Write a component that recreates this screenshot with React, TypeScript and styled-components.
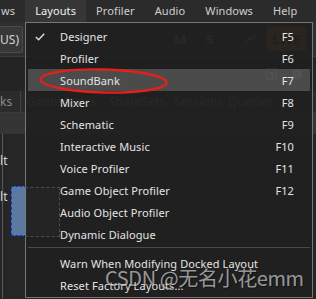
import React from 'react';
import styled, { createGlobalStyle, css } from 'styled-components';

const GlobalStyle = createGlobalStyle`
  html, body {
    margin: 0;
    padding: 0;
    background: #262626;
  }
  body {
    font-family: 'Noto Sans', 'Segoe UI', sans-serif;
    -webkit-font-smoothing: antialiased;
  }
`;

interface LayoutEntry {
  label: string;
  shortcut?: string;
  checked?: boolean;
  active?: boolean;
}

const menuBarItems = ['ws', 'Layouts', 'Profiler', 'Audio', 'Windows', 'Help'];

const layoutEntries: LayoutEntry[] = [
  { label: 'Designer', shortcut: 'F5', checked: true },
  { label: 'Profiler', shortcut: 'F6' },
  { label: 'SoundBank', shortcut: 'F7', active: true },
  { label: 'Mixer', shortcut: 'F8' },
  { label: 'Schematic', shortcut: 'F9' },
  { label: 'Interactive Music', shortcut: 'F10' },
  { label: 'Voice Profiler', shortcut: 'F11' },
  { label: 'Game Object Profiler', shortcut: 'F12' },
  { label: 'Audio Object Profiler' },
  { label: 'Dynamic Dialogue' },
];

const optionEntries: LayoutEntry[] = [
  { label: 'Warn When Modifying Docked Layout' },
  { label: 'Reset Factory Layouts...' },
];

const explorerTabs = [
  { label: 'ks', width: 21 },
  { label: 'Game Syncs', width: 82 },
  { label: 'ShareSets', width: 65 },
  { label: 'Sessions', width: 54 },
  { label: 'Queries', width: 60 },
];

const Check = () => (
  <svg width="10" height="8" viewBox="0 0 10 8">
    <polyline
      points="0.8,4 3.6,6.8 9.2,0.8"
      fill="none"
      stroke="#dcdcdc"
      strokeWidth="1.4"
    />
  </svg>
);

const Wave = () => (
  <svg width="11" height="8" viewBox="0 0 11 8">
    <polyline
      points="0,7 3,3 5,5 8,1 11,3"
      fill="none"
      stroke="#8c8c8c"
      strokeWidth="1.3"
    />
  </svg>
);

const MenuRow = ({ entry }: { entry: LayoutEntry }) => (
  <Item $active={entry.active}>
    <CheckCell>{entry.checked && <Check />}</CheckCell>
    <span>{entry.label}</span>
    <Shortcut>{entry.shortcut}</Shortcut>
  </Item>
);

export default function App() {
  return (
    <>
      <GlobalStyle />
      <Screen>
        <MenuBar>
          {menuBarItems.map((item) => (
            <MenuBarItem key={item} $open={item === 'Layouts'} $cut={item === 'ws'}>
              {item}
            </MenuBarItem>
          ))}
        </MenuBar>

        <Toolbar>
          <Combo>US)</Combo>
          <ToolGlyph $offset={151}>M</ToolGlyph>
          <ToolGlyph $offset={22}>S</ToolGlyph>
          <WaveSlot>
            <Wave />
          </WaveSlot>
          <LiveButton>LIVE</LiveButton>
        </Toolbar>

        <InfoBar>
          <CountBadge>1</CountBadge>
          <HelpBadge>?</HelpBadge>
        </InfoBar>

        <TabRow>
          {explorerTabs.map((tab) => (
            <Tab key={tab.label} $width={tab.width}>
              {tab.label}
            </Tab>
          ))}
        </TabRow>

        <HeaderRow />

        <ListPanel>
          <ListRow>lt</ListRow>
          <ListRow>lt</ListRow>
          <DropTarget />
        </ListPanel>

        <Dropdown>
          {layoutEntries.map((entry) => (
            <MenuRow key={entry.label} entry={entry} />
          ))}
          <Separator />
          {optionEntries.map((entry) => (
            <MenuRow key={entry.label} entry={entry} />
          ))}
        </Dropdown>

        <DragOutline />

        <Annotation width="316" height="299" viewBox="0 0 316 299">
          <ellipse
            cx="103.5"
            cy="81"
            rx="63"
            ry="11.5"
            fill="none"
            stroke="#e3201b"
            strokeWidth="2.4"
            transform="rotate(1.5 103.5 81)"
          />
        </Annotation>

        <Watermark>CSDN @无名小花emm</Watermark>
      </Screen>
    </>
  );
}

const Screen = styled.div`
  position: relative;
  width: 316px;
  height: 299px;
  overflow: hidden;
  background: #262626;
  font-size: 11px;
  letter-spacing: 0.1px;
`;

const MenuBar = styled.div`
  height: 22px;
  display: flex;
  background: #2b2b2b;
`;

const MenuBarItem = styled.div<{ $open?: boolean; $cut?: boolean }>`
  height: 22px;
  line-height: 22px;
  padding: ${({ $cut }) => ($cut ? '0 10px 0 1px' : '0 10px')};
  color: #cfcfcf;
  font-size: 11px;
  white-space: nowrap;
  ${({ $open }) =>
    $open &&
    css`
      background: #363636;
      color: #f0f0f0;
    `};
`;

const Toolbar = styled.div`
  height: 34px;
  display: flex;
  align-items: center;
  background: #2f2f2f;
  border-bottom: 1px solid #3d3d3d;
`;

const Combo = styled.div`
  width: 24px;
  height: 27px;
  margin-left: -1px;
  box-sizing: border-box;
  display: flex;
  align-items: center;
  background: #383838;
  border: 1px solid #4a4a4a;
  border-radius: 2px;
  color: #d4d4d4;
  font-size: 12px;
  white-space: nowrap;
  overflow: hidden;
`;

const ToolGlyph = styled.div<{ $offset: number }>`
  margin-left: ${({ $offset }) => $offset}px;
  width: 10px;
  color: #8a8a8a;
  font-weight: 700;
  font-size: 13px;
`;

const WaveSlot = styled.div`
  margin-left: 30px;
  display: flex;
`;

const LiveButton = styled.div`
  margin-left: 10px;
  width: 39px;
  height: 24px;
  display: flex;
  align-items: center;
  justify-content: center;
  border-radius: 2px;
  background: #9a6a14;
  color: #1a140a;
  font-weight: 700;
  font-size: 13px;
`;

const InfoBar = styled.div`
  height: 34px;
  display: flex;
  align-items: center;
  justify-content: flex-end;
  gap: 15px;
  padding-right: 14px;
  background: #242424;
`;

const CountBadge = styled.div`
  width: 11px;
  height: 12px;
  box-sizing: border-box;
  border: 1px solid #9a9a9a;
  border-radius: 2px;
  display: flex;
  align-items: center;
  justify-content: center;
  color: #bcbcbc;
  font-size: 9px;
  font-weight: 700;
`;

const HelpBadge = styled.div`
  width: 10px;
  height: 10px;
  border-radius: 50%;
  background: #8a8a8a;
  display: flex;
  align-items: center;
  justify-content: center;
  color: #242424;
  font-size: 8px;
  font-weight: 700;
`;

const TabRow = styled.div`
  height: 22px;
  display: flex;
  background: #2b2b2b;
  border-bottom: 1px solid #3a3a3a;
  box-sizing: border-box;
`;

const Tab = styled.div<{ $width: number }>`
  width: ${({ $width }) => $width}px;
  flex: none;
  box-sizing: border-box;
  display: flex;
  align-items: center;
  padding-left: 6px;
  border-right: 1px solid #424242;
  color: #8c8c8c;
  font-size: 12px;
  white-space: nowrap;
  &:first-child {
    padding-left: 0;
  }
`;

const HeaderRow = styled.div`
  height: 21px;
  background: #353535;
`;

const ListPanel = styled.div`
  position: relative;
  height: 164px;
  margin-left: 2px;
  padding-top: 17px;
  box-sizing: border-box;
  display: flex;
  flex-direction: column;
  gap: 16px;
  border-left: 1px solid #5a5a5a;
`;

const ListRow = styled.div`
  height: 20px;
  line-height: 20px;
  margin-left: -3px;
  color: #d2d2d2;
  font-size: 12px;
`;

const DropTarget = styled.div`
  position: absolute;
  left: 8px;
  top: 52px;
  width: 16px;
  height: 50px;
  box-sizing: border-box;
  background: #5b7aa2;
  border: 1px dashed #1b2fd6;
  border-right: none;
`;

const Dropdown = styled.div`
  position: absolute;
  left: 25px;
  top: 22px;
  width: 288px;
  box-sizing: border-box;
  padding: 2px 2px 1px;
  border: 1px solid #767676;
  background: rgba(31, 31, 31, 0.92);
  color: #e4e4e4;
`;

const Item = styled.div<{ $active?: boolean }>`
  height: 22px;
  display: grid;
  grid-template-columns: 32px 1fr auto;
  align-items: center;
  padding-right: 16px;
  white-space: nowrap;
  ${({ $active }) =>
    $active &&
    css`
      background: rgba(255, 255, 255, 0.2);
    `};
`;

const CheckCell = styled.div`
  display: flex;
  padding-left: 7px;
  padding-top: 1px;
`;

const Shortcut = styled.span`
  text-align: right;
`;

const Separator = styled.div`
  height: 5px;
  &::after {
    content: '';
    display: block;
    margin-top: 2px;
    height: 1px;
    background: #4a4a4a;
  }
`;

const DragOutline = styled.div`
  position: absolute;
  left: 25px;
  top: 187px;
  width: 35px;
  height: 50px;
  box-sizing: border-box;
  border: 1px dashed #4e4e4e;
  border-left: none;
  background: rgba(255, 255, 255, 0.02);
`;

const Annotation = styled.svg`
  position: absolute;
  left: 0;
  top: 0;
  pointer-events: none;
`;

const Watermark = styled.div`
  position: absolute;
  left: 105px;
  top: 265px;
  font-family: 'Noto Sans CJK SC', 'Noto Sans', sans-serif;
  font-size: 20px;
  line-height: 26px;
  letter-spacing: -0.4px;
  color: rgba(235, 235, 235, 0.62);
  text-shadow: 1px 1px 1px rgba(0, 0, 0, 0.45);
  white-space: nowrap;
`;
